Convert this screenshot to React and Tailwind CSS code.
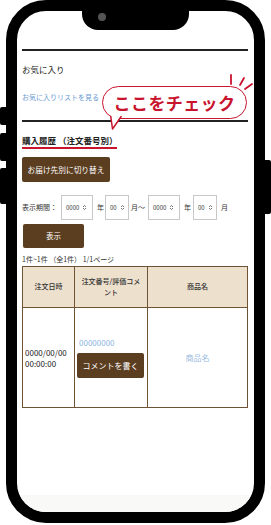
const brown = 'bg-[#5b3d20]';

function UpDown() {
  return (
    <svg width="5" height="7" viewBox="0 0 5 7" className="shrink-0">
      <path d="M1 3 L2.5 1.5 L4 3 M1 4 L2.5 5.5 L4 4" fill="none" stroke="#555" strokeWidth="0.8" />
    </svg>
  );
}

function Select({ value, wide }) {
  return (
    <div
      className={`flex h-[25px] items-center gap-[3px] border border-[#c8c8c8] bg-white pl-[4px] text-[6px] text-[#333] ${
        wide ? 'w-[32px]' : 'w-[24px]'
      }`}
    >
      <span>{value}</span>
      <UpDown />
    </div>
  );
}

export default function App() {
  return (
    <div className="relative h-[525px] w-[271px] overflow-hidden bg-white font-['Noto_Sans_CJK_JP','Noto_Sans',sans-serif] text-[#222]">
      {/* side buttons */}
      <div className="absolute left-0 top-[107px] h-[18px] w-[8px] rounded-l-[2px] bg-black" />
      <div className="absolute left-0 top-[133px] h-[28px] w-[8px] rounded-l-[2px] bg-black" />
      <div className="absolute left-0 top-[168px] h-[36px] w-[8px] rounded-l-[2px] bg-black" />
      <div className="absolute right-0 top-[160px] h-[54px] w-[8px] rounded-r-[2px] bg-black" />

      <div className="relative ml-[6px] h-[523px] w-[259px] overflow-hidden rounded-[40px] border-[11px] border-black bg-white">
        {/* notch */}
        <div className="absolute left-[65px] top-0 z-10 h-[19px] w-[107px] rounded-b-[16px] bg-black">
          <div className="absolute left-[16px] top-[2px] h-[8px] w-[8px] rounded-full bg-[#555]" />
        </div>

        <div className="flex h-full flex-col">
          <div className="pl-[5px] pr-[6px] pt-[38px]">
            <div className="h-[2px] bg-[#222]" />
            <p className="mt-[12px] text-[8.5px] leading-[12px]">お気に入り</p>
            <p className="mt-[16px] text-[7px] leading-[12px] text-[#6b9bd3]">お気に入りリストを見る</p>
            <div className="mt-[17px] h-[2px] bg-[#222]" />

            <div className="mt-[12px] w-fit border-b-2 border-[#c9142e] pb-[1px] text-[8.5px] font-bold leading-[12px]">
              購入履歴 （注文番号別）
            </div>

            <button className={`mt-[8px] block h-[25px] w-[88px] rounded-[2px] ${brown} text-[7.7px] text-white`}>
              お届け先別に切り替え
            </button>

            <div className="mt-[13px] flex items-center text-[7px] text-[#333]">
              <span className="mr-[4px]">表示期間：</span>
              <Select value="0000" wide />
              <span className="ml-[4px] mr-[1px]">年</span>
              <Select value="00" />
              <span className="ml-[2px] mr-[3px]">月～</span>
              <Select value="0000" wide />
              <span className="ml-[4px] mr-[2px]">年</span>
              <Select value="00" />
              <span className="ml-[4px]">月</span>
            </div>

            <button className={`ml-[1px] mt-[4px] block h-[24px] w-[61px] rounded-[2px] ${brown} text-[7.5px] text-white`}>
              表示
            </button>

            <p className="mt-[5px] text-[7px] leading-[12px] text-[#333]">1件~1件 （全1件） 1/1ページ</p>

            <table className="mt-[1px] w-full table-fixed border-collapse text-[7px]">
              <colgroup>
                <col className="w-[52px]" />
                <col className="w-[73px]" />
                <col />
              </colgroup>
              <thead>
                <tr className="h-[41px] bg-[#ede0cd] text-[#333]">
                  <th className="border border-[#6e5335] px-[4px] font-medium leading-[11.5px]">注文日時</th>
                  <th className="border border-[#6e5335] px-[5px] font-medium leading-[11.5px]">注文番号/評価コメント</th>
                  <th className="border border-[#6e5335] px-[4px] font-medium leading-[11.5px]">商品名</th>
                </tr>
              </thead>
              <tbody>
                <tr className="h-[100px]">
                  <td className="border border-[#6e5335] pl-[2px] align-middle text-[8px] leading-[11px] text-[#222]">
                    0000/00/00 00:00:00
                  </td>
                  <td className="border border-[#6e5335] px-[2px] align-middle">
                    <div className="pl-[2px] text-[8px] leading-[11px] text-[#8db4e2]">00000000</div>
                    <button className={`mt-[5px] block h-[25px] w-[67px] rounded-[2px] ${brown} text-[8px] text-white`}>
                      コメントを書く
                    </button>
                  </td>
                  <td className="border border-[#6e5335] text-center align-middle text-[8px] text-[#9cbde2]">商品名</td>
                </tr>
              </tbody>
            </table>
          </div>
          <div className="mt-auto h-[17px] bg-[#f9f9f7]" />
        </div>

        {/* callout bubble */}
        <div className="absolute left-[85px] top-[75px] flex h-[33px] w-[145px] items-center justify-center rounded-full border-[1.5px] border-[#c9142e] bg-white text-[17px] font-bold tracking-[0.4px] text-[#c9142e]">
          ここをチェック
          <svg width="13" height="15" viewBox="0 0 13 15" className="absolute left-[7px] top-[29px]">
            <path d="M0.7 0 L2.5 13 L11.5 0" fill="white" stroke="#c9142e" strokeWidth="1.5" strokeLinejoin="round" />
          </svg>
        </div>
        <svg width="30" height="22" viewBox="0 0 30 22" className="absolute left-[209px] top-[61px]">
          <path d="M5 3 L5 12 M14 13 L18 6 M19 17 L26 12" fill="none" stroke="#c9142e" strokeWidth="1.8" strokeLinecap="round" />
        </svg>
      </div>
    </div>
  );
}
